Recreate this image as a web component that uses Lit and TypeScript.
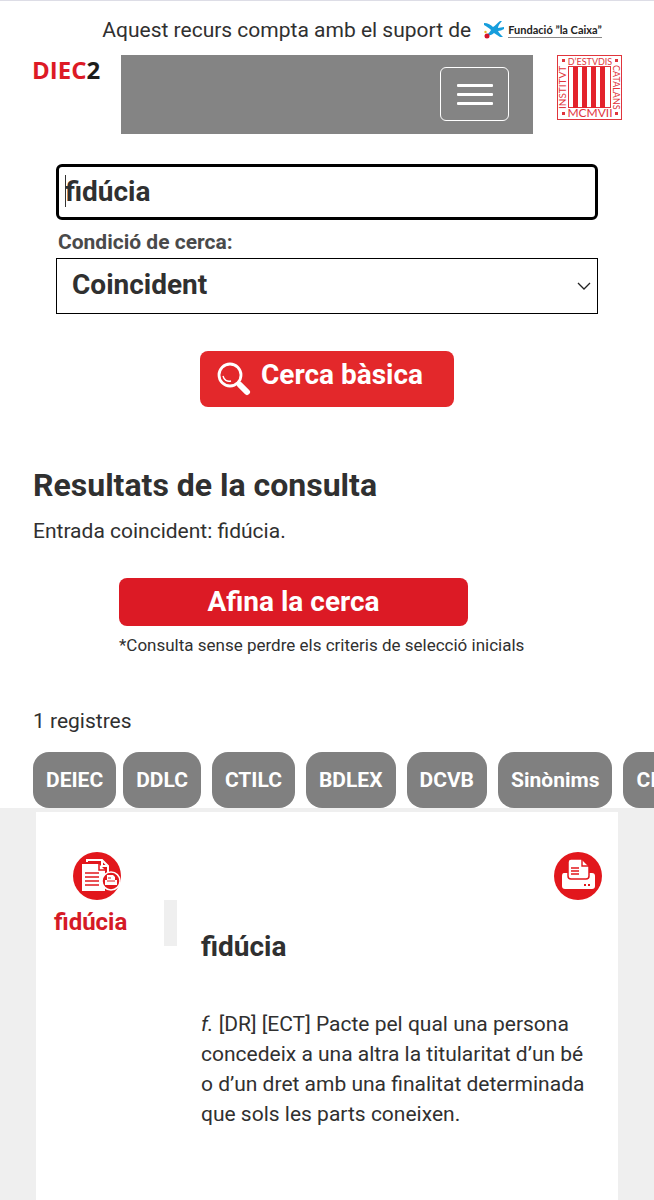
import { LitElement, css, html, svg } from 'lit';
import { customElement, property, state } from 'lit/decorators.js';

const dictionaries = ['DEIEC', 'DDLC', 'CTILC', 'BDLEX', 'DCVB', 'Sinònims', 'CIT'];

@customElement('site-header')
export class SiteHeader extends LitElement {
  render() {
    return html`
      <div class="support">
        <span>Aquest recurs compta amb el suport de</span>
        <a class="sponsor" href="#caixa" aria-label="Fundació la Caixa">
          <svg width="22" height="18" viewBox="0 0 22 18" aria-hidden="true">
            <path d="M1 2C5 2 8 4 10 6C12 5 14 2 17 0H19C17 2 15 5 15 7C17 7 19 6 21 6V8C19 9 17 10 15 10C16 12 18 14 20 16H17C15 15 13 13 11 12C9 14 6 15 3 14C5 13 7 11 8 9C6 7 3 5 1 4Z" fill="#159ddc" />
            <circle cx="4" cy="15" r="2.5" fill="#d5122b" />
            <circle cx="2.500" cy="11" r="1.2" fill="#e8b820" />
          </svg>
          <span class="sponsor-name">Fundació ”la Caixa”</span>
        </a>
      </div>
      <header class="bar">
        <a class="brand" href="#inici">DIEC<span class="two">2</span></a>
        <nav class="nav">
          <button class="toggler" aria-label="Menú">
            <span class="line"></span>
            <span class="line"></span>
            <span class="line"></span>
          </button>
        </nav>
        <a class="institute" href="#iec" aria-label="Institut d'Estudis Catalans">
          <svg width="65" height="65" viewBox="0 0 65 65" aria-hidden="true">
            <rect x="0.5" y="0.5" width="64" height="64" fill="#fff" stroke="#e0353c" />
            <rect x="11.5" y="11.5" width="42" height="41" fill="none" stroke="#e0353c" />
            ${[16, 25, 34, 43].map((x) => svg`<rect x=${x} y="12" width="5" height="41" fill="#e3222b" />`)}
            <g fill="#e0353c">
              <text x="33" y="10" text-anchor="middle">D’ESTVDIS</text>
              <text x="33" y="62" text-anchor="middle" font-size="12">MCMVII</text>
              <text transform="translate(9 54) rotate(-90)" font-size="10">INSTITVT</text>
              <text transform="translate(56 10) rotate(90)">CATALANS</text>
              <rect x="5" y="4" width="3" height="3" />
              <rect x="58" y="4" width="3" height="3" />
              <rect x="5" y="57" width="3" height="3" />
              <rect x="58" y="57" width="3" height="3" />
            </g>
          </svg>
        </a>
      </header>
    `;
  }

  static styles = css`
    :host {
      display: block;
    }

    .support {
      display: flex;
      justify-content: center;
      align-items: center;
      gap: 12px;
      height: 54px;
      padding: 4px 0 0 50px;
      box-sizing: border-box;
    }

    .sponsor {
      display: flex;
      align-items: center;
      gap: 3px;
      color: #222;
      text-decoration: none;
    }

    .sponsor-name {
      font: 700 11px/14px Lato, sans-serif;
      border-bottom: 1px solid #888;
      white-space: nowrap;
    }

    .bar {
      display: flex;
      align-items: flex-start;
      gap: 24px;
      padding: 0 32px;
    }

    .brand {
      width: 65px;
      font: 700 24px/30px 'Liberation Sans Narrow', 'Open Sans', sans-serif;
      color: #dd1a25;
      text-decoration: none;
    }

    .two {
      color: #1d1d1b;
    }

    .nav {
      display: flex;
      flex: 1;
      justify-content: flex-end;
      padding: 12px 24px 13px;
      background: #848484;
    }

    .toggler {
      display: flex;
      flex-direction: column;
      align-items: center;
      justify-content: center;
      gap: 6px;
      width: 69px;
      height: 54px;
      padding: 0;
      background: transparent;
      border: 1px solid #fff;
      border-radius: 6px;
    }

    .line {
      width: 36px;
      height: 3px;
      border-radius: 1px;
      background: #fff;
    }

    .institute svg {
      display: block;
      font: 9px Lato, sans-serif;
    }
  `;
}

@customElement('search-form')
export class SearchForm extends LitElement {
  @property() term = '';

  render() {
    return html`
      <form class="form" @submit=${(e: Event) => e.preventDefault()}>
        <input class="term" type="text" aria-label="Cerca" .value=${this.term} />
        <label class="label" for="condition">Condició de cerca:</label>
        <div class="select-wrap">
          <select class="select" id="condition">
            <option>Coincident</option>
            <option>Començada per</option>
            <option>Acabada en</option>
            <option>Que contingui</option>
          </select>
          <svg class="chevron" width="14" height="8" viewBox="0 0 14 8" aria-hidden="true">
            <path d="M1 1L7 7L13 1" fill="none" stroke="#222" stroke-width="1.3" />
          </svg>
        </div>
        <button class="submit">
          <svg width="34" height="34" viewBox="0 0 34 34" fill="none" stroke="#fff" aria-hidden="true">
            <circle cx="13" cy="13" r="11" stroke-width="2.8" />
            <path d="M6 14C7 18 10 20 14 19" stroke-width="1.4" />
            <path d="M20 21L23 23" stroke-width="3" />
            <path d="M23 23L30 30" stroke-width="6" stroke-linecap="round" />
          </svg>
          <span>Cerca bàsica</span>
        </button>
      </form>
    `;
  }

  static styles = css`
    :host {
      display: block;
    }

    .form {
      display: flex;
      flex-direction: column;
      padding: 30px 56px 0;
    }

    .term,
    .select {
      box-sizing: border-box;
      width: 100%;
      height: 56px;
      font: 700 28px/32px Roboto, sans-serif;
      color: #303030;
    }

    /* text caret at the start of the field */
    .term {
      padding: 0 6px 2px;
      border: 3px solid #000;
      border-radius: 6px;
      outline: none;
      background: linear-gradient(#333, #333) 6px 8px / 1px 32px no-repeat #fff;
    }

    .label {
      padding: 9px 2px 3px;
      font-size: 21px;
      line-height: 26px;
      font-weight: 700;
      color: #4a4a4a;
    }

    .select-wrap {
      display: grid;
      align-items: center;
    }

    .select,
    .chevron {
      grid-area: 1 / 1;
    }

    .select {
      appearance: none;
      padding: 0 15px 2px;
      border: 1px solid #000;
      border-radius: 0;
      background: #fff;
    }

    .chevron {
      justify-self: end;
      margin-right: 7px;
      pointer-events: none;
    }

    .submit {
      display: flex;
      align-items: center;
      align-self: center;
      gap: 10px;
      width: 254px;
      height: 56px;
      margin-top: 37px;
      padding: 0 17px;
      border: 0;
      border-radius: 8px;
      background: #e3282b;
      color: #fff;
      font: 700 28px/32px Roboto, sans-serif;
    }

    .submit span {
      padding-bottom: 8px;
    }
  `;
}

@customElement('dictionary-entry')
export class DictionaryEntry extends LitElement {
  @property() word = '';

  render() {
    return html`
      <article class="card">
        <aside class="side">
          <button class="round" aria-label="Imprimeix totes les entrades">
            <svg width="48" height="48" viewBox="0 0 48 48" aria-hidden="true">
              <circle cx="24" cy="24" r="24" fill="#e2171c" />
              <path d="M14 10V8H29L35 14V20M29 8V14H35" fill="none" stroke="#fff" stroke-width="2" />
              <path d="M9 12H26L32 18V39H9Z" fill="#fff" />
              <path d="M26 11V18H33" fill="none" stroke="#e2171c" stroke-width="1.5" />
              <path d="M12 21H26M12 25H26M12 29H26M12 33H26" stroke="#e2171c" stroke-width="1.7" />
              <circle cx="38" cy="29" r="9" fill="#e2171c" stroke="#fff" stroke-width="1.5" />
              <path d="M34 23H40L42 25V28H44V33H32V28H34Z" fill="#fff" />
              <path d="M35 26H38M34 29H42" stroke="#e2171c" />
            </svg>
          </button>
          <a class="word" href="#entrada">${this.word}</a>
        </aside>
        <div class="divider"></div>
        <section class="content">
          <button class="round print" aria-label="Imprimeix">
            <svg width="48" height="48" viewBox="0 0 48 48" aria-hidden="true">
              <circle cx="24" cy="24" r="24" fill="#e2171c" />
              <path d="M10 21H38Q41 21 41 24V34Q41 37 38 37H11Q8 37 8 34V24Q8 21 10 21Z" fill="#fff" />
              <path d="M17 7H28L35 14V24Q35 27 32 27H17Q14 27 14 24V10Q14 7 17 7Z" fill="#fff" stroke="#e2171c" stroke-width="1.5" />
              <path d="M28 7V14H35" fill="none" stroke="#e2171c" stroke-width="1.4" />
              <path d="M17 16H25M17 19H25M17 22H25" stroke="#e2171c" stroke-width="1.4" />
              <path d="M30 33H32M34 33H36" stroke="#e2171c" stroke-width="2" />
            </svg>
          </button>
          <h3 class="title">${this.word}</h3>
          <p class="definition">
            <i>f.</i> [DR] [ECT] Pacte pel qual una persona concedeix a una altra la titularitat d’un bé o d’un
            dret amb una finalitat determinada que sols les parts coneixen.
          </p>
        </section>
      </article>
    `;
  }

  static styles = css`
    :host {
      display: grid;
      flex: 1;
      padding: 4px 36px 0;
      background: #efefef;
    }

    .card {
      display: grid;
      grid-template-columns: 104px 13px 1fr;
      column-gap: 24px;
      padding: 40px 16px 60px 0;
      background: #fff;
    }

    .side {
      display: flex;
      flex-direction: column;
      align-items: flex-start;
      gap: 8px;
      padding-left: 18px;
    }

    .side .round {
      margin-left: 19px;
    }

    .round {
      padding: 0;
      border: 0;
      background: none;
    }

    .round svg {
      display: block;
    }

    .word {
      font-size: 24px;
      line-height: 28px;
      font-weight: 700;
      color: #d51a26;
      text-decoration: none;
    }

    .divider {
      height: 46px;
      margin-top: 48px;
      background: #efefef;
    }

    .content {
      display: flex;
      flex-direction: column;
    }

    .print {
      align-self: flex-end;
    }

    .title {
      margin: 31px 0 46px;
      font-size: 28px;
      line-height: 32px;
    }

    .definition {
      margin: 0;
      padding-right: 12px;
      line-height: 30px;
    }
  `;
}

@customElement('app-root')
export class AppRoot extends LitElement {
  @state() private word = 'fidúcia';

  render() {
    return html`
      <site-header></site-header>
      <main class="main">
        <search-form .term=${this.word}></search-form>
        <section class="results">
          <h2 class="heading">Resultats de la consulta</h2>
          <p class="text">Entrada coincident: ${this.word}.</p>
          <div class="refine">
            <button class="refine-button">Afina la cerca</button>
            <small class="note">*Consulta sense perdre els criteris de selecció inicials</small>
          </div>
          <p class="text">1 registres</p>
        </section>
        <nav class="tabs">
          ${dictionaries.map((name) => html`<a class="tab" href="#${name}">${name}</a>`)}
        </nav>
        <dictionary-entry .word=${this.word}></dictionary-entry>
      </main>
    `;
  }

  static styles = css`
    :host {
      display: flex;
      flex-direction: column;
      box-sizing: border-box;
      min-height: 100vh;
      border-top: 1px solid #dddde6;
      overflow: hidden;
      background: #fff;
      color: #303030;
      font-family: Roboto, sans-serif;
      font-size: 21px;
      line-height: 30px;
    }

    .main {
      display: flex;
      flex: 1;
      flex-direction: column;
    }

    .results {
      padding: 58px 33px 0;
    }

    .heading {
      margin: 0 0 11px;
      font-size: 32px;
      line-height: 40px;
    }

    .text {
      margin: 0;
    }

    .refine {
      display: flex;
      flex-direction: column;
      align-items: flex-start;
      padding: 32px 0 46px 86px;
    }

    .refine-button {
      width: 349px;
      height: 48px;
      padding: 0;
      border: 0;
      border-radius: 8px;
      background: #dc1a25;
      color: #fff;
      font: 700 28px/32px Roboto, sans-serif;
    }

    .note {
      margin-top: 4px;
      font-size: 17px;
    }

    .tabs {
      display: flex;
      gap: 11px;
      padding: 16px 33px 0;
    }

    .tab {
      flex: none;
      padding: 13px;
      border-radius: 16px;
      background: #808080;
      color: #fff;
      font-weight: 700;
      text-decoration: none;
    }

    .tab:first-child {
      margin-right: -4px;
    }
  `;
}
